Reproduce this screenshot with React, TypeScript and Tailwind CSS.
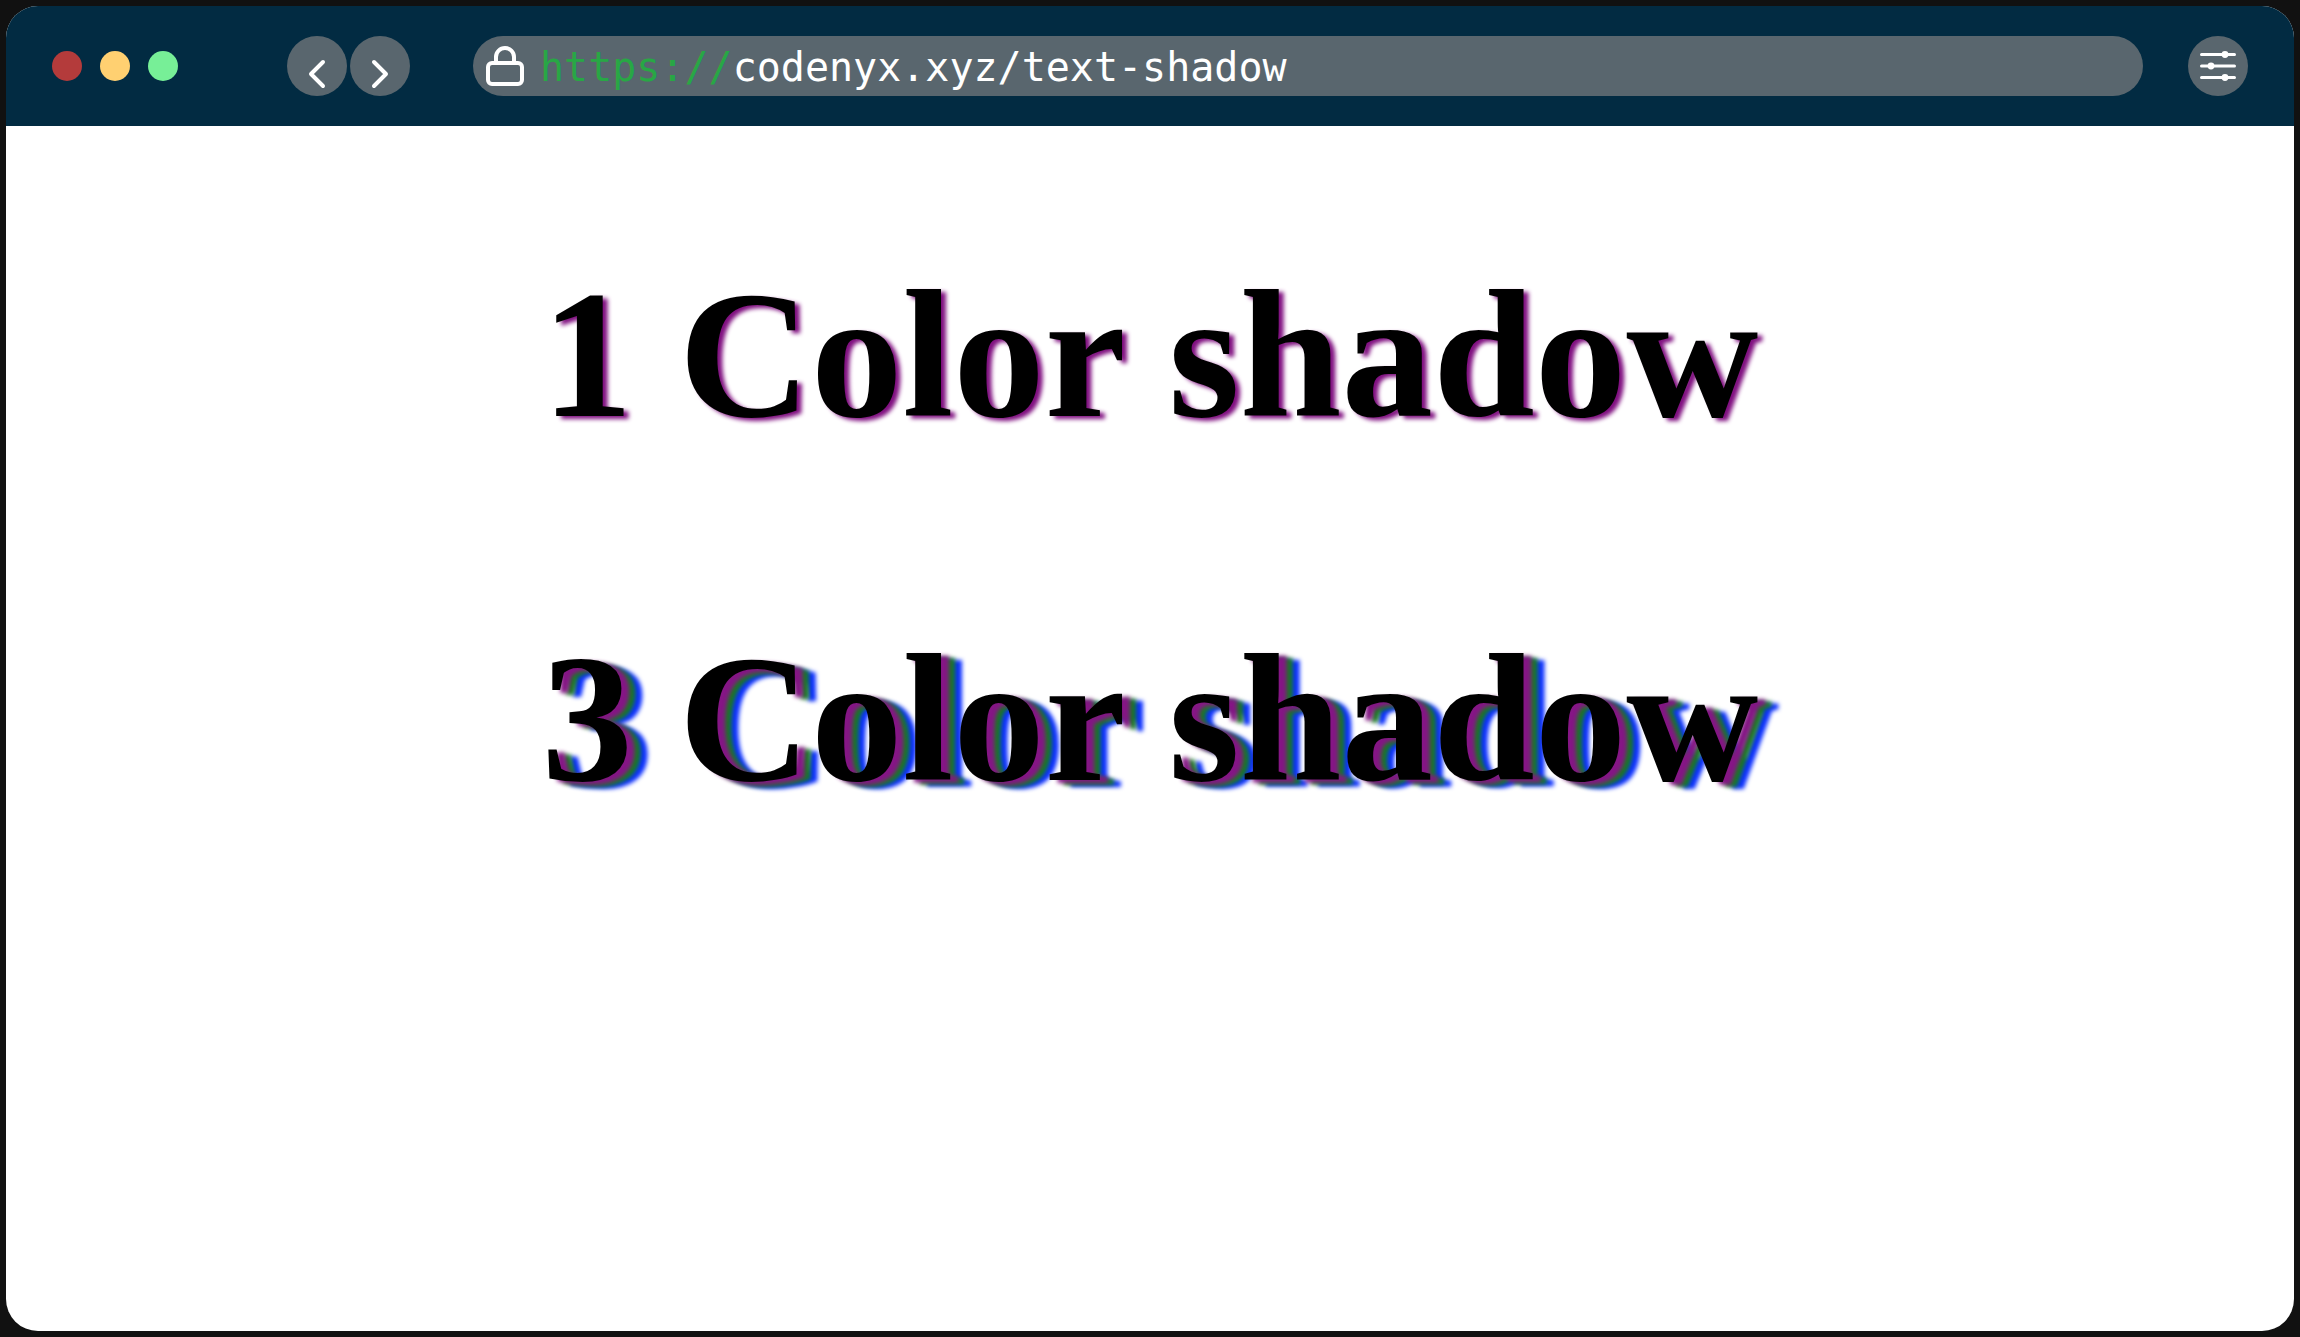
import { useState } from "react";

const roundButton =
  "flex size-[60px] shrink-0 items-center justify-center rounded-full bg-[#59666e] text-white";

function Chevron({ points }: { points: string }) {
  return (
    <svg
      viewBox="0 0 60 60"
      className="size-full"
      fill="none"
      stroke="currentColor"
      strokeWidth="4"
      strokeLinecap="round"
      strokeLinejoin="round"
      aria-hidden="true"
    >
      <polyline points={points} />
    </svg>
  );
}

function LockIcon() {
  return (
    <svg
      viewBox="0 0 38 42"
      className="h-[42px] w-[38px] shrink-0"
      fill="none"
      stroke="currentColor"
      strokeWidth="4"
      strokeLinecap="round"
      aria-hidden="true"
    >
      <rect x="2" y="18" width="34" height="21" rx="4" />
      <path d="M10 18V12a9 9 0 0 1 18 0V18" />
    </svg>
  );
}

function SlidersIcon() {
  return (
    <svg viewBox="0 0 60 60" className="size-full" aria-hidden="true">
      <g stroke="currentColor" strokeWidth="3" strokeLinecap="round">
        <path d="M13.5 18.5H46.5M13.5 30H46.5M13.5 41.5H46.5" />
      </g>
      <g fill="currentColor">
        <circle cx="37" cy="18.5" r="3.4" />
        <circle cx="23" cy="30" r="3.4" />
        <circle cx="37" cy="41.5" r="3.4" />
      </g>
    </svg>
  );
}

function AddressBar() {
  const [address, setAddress] = useState("codenyx.xyz/text-shadow");
  return (
    <label className="ml-[63px] flex h-[60px] min-w-0 flex-1 items-center rounded-full bg-[#59666e] pl-[13px] pr-6 font-['DejaVu_Sans_Mono',monospace] text-[40px] leading-[60px] text-white">
      <LockIcon />
      <span className="ml-4 pt-0.5 text-[#28a745]">https://</span>
      <input
        type="text"
        aria-label="Address"
        value={address}
        onChange={(e) => setAddress(e.target.value)}
        className="h-[60px] min-w-0 flex-1 bg-transparent pt-0.5 outline-none"
      />
    </label>
  );
}

export default function App() {
  return (
    <div className="flex min-h-screen flex-col bg-[#111111] p-[6px]">
      <div className="flex flex-1 flex-col overflow-hidden rounded-[32px] bg-white">
        <header className="flex h-[120px] items-center bg-[#022b42] pl-[46px] pr-[46px]">
          <div className="flex shrink-0 gap-[18px]">
            <button type="button" aria-label="Close" className="size-[30px] rounded-full bg-[#b43b3b]" />
            <button type="button" aria-label="Minimize" className="size-[30px] rounded-full bg-[#ffd071]" />
            <button type="button" aria-label="Maximize" className="size-[30px] rounded-full bg-[#77ef97]" />
          </div>
          <nav className="ml-[109px] flex shrink-0 gap-[3px]">
            <button type="button" aria-label="Back" className={roundButton}>
              <Chevron points="36,26 24,38 36,50" />
            </button>
            <button type="button" aria-label="Forward" className={roundButton}>
              <Chevron points="24,26 36,38 24,50" />
            </button>
          </nav>
          <AddressBar />
          <button type="button" aria-label="Settings" className={`${roundButton} ml-[45px]`}>
            <SlidersIcon />
          </button>
        </header>
        <main className="flex flex-col items-center gap-[154px] pt-[124px] text-center font-['Liberation_Serif',serif] text-[183px] font-bold leading-[210px] text-black">
          <h1 className="[text-shadow:5px_3px_4px_#801080]">1 Color shadow</h1>
          <h1 className="[text-shadow:8px_3px_4px_#851685,14px_5px_4px_#187c20,21px_7px_4px_#0c30ff]">
            3 Color shadow
          </h1>
        </main>
      </div>
    </div>
  );
}
